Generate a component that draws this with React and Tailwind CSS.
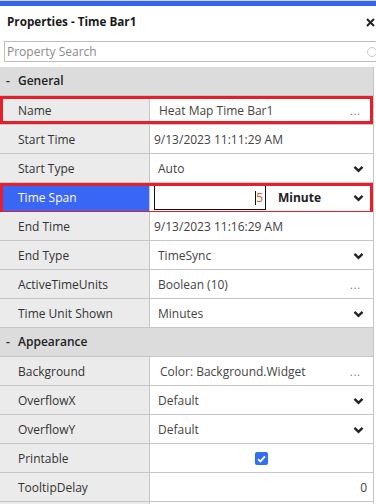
import React from "react";

const Chevron = () => (
  <svg width="11" height="8" viewBox="0 0 11 8" className="shrink-0">
    <path d="M1.5 1.8 L5.5 5.8 L9.5 1.8" fill="none" stroke="#222" strokeWidth="2.4" />
  </svg>
);

const Dots = () => <span className="text-[10px] tracking-[1px] text-[#666] leading-none">...</span>;

const Row = ({ label, children, highlight, active }) => (
  <div className="relative grid grid-cols-[150px_1fr] h-[29px] border-b border-[#c6c6c6]">
    <div
      className={
        active
          ? "flex items-center pl-[18px] pt-[1px] bg-[#3a66f6] text-white border-r border-[#c6c6c6]"
          : "flex items-center pl-[18px] pt-[1px] bg-[#ebebeb] text-[#333] border-r border-[#c6c6c6]"
      }
    >
      {label}
    </div>
    <div className="flex items-center pt-[1px] bg-white text-[#444] min-w-0">{children}</div>
    {highlight && (
      <div
        className={
          active
            ? "absolute left-0 right-0 top-0 -bottom-[3px] border-[3px] border-[#e6202b]"
            : "absolute left-0 right-0 top-0 bottom-0 border-[3px] border-[#e6202b]"
        }
      />
    )}
  </div>
);

const Section = ({ title }) => (
  <div className="flex items-center h-[29px] bg-[#dcdcdc] border-b border-[#c6c6c6] font-semibold text-[#222]">
    <span className="w-[18px] pl-[6px]">-</span>
    <span>{title}</span>
  </div>
);

const Select = ({ value, pl = "pl-[8px]" }) => (
  <div className={`flex flex-1 items-center justify-between ${pl} pr-[9px]`}>
    <span>{value}</span>
    <Chevron />
  </div>
);

const Dotted = ({ value, pl = "pl-[9px]" }) => (
  <div className={`flex flex-1 items-center justify-between ${pl} pr-[12px]`}>
    <span>{value}</span>
    <Dots />
  </div>
);

export default function App() {
  return (
    <div
      className="w-[376px] h-[504px] overflow-hidden bg-white text-[12px]"
      style={{ fontFamily: '"Open Sans", sans-serif' }}
    >
      <div className="h-[1px] bg-[#d6d6d6]" />
      <div className="h-[5px] bg-[#3366ee]" />
      <div className="flex items-center justify-between h-[35px] pb-[3px] pl-[7px] pr-[1px]">
        <span className="font-bold text-[11.7px] text-[#1a1a1a]">Properties - Time Bar1</span>
        <svg width="9" height="9" viewBox="0 0 9 9">
          <path d="M1 1 L8 8 M8 1 L1 8" stroke="#222" strokeWidth="2" />
        </svg>
      </div>
      <div className="relative ml-[4px] w-[380px] h-[21px] border border-[#bdbdbd] flex items-center pl-[2px]">
        <span className="text-[#8a8a8a] text-[12px]">Property Search</span>
        <div className="absolute left-[362px] top-[5px] w-[10px] h-[10px] rounded-full border-[1.5px] border-[#c8c8c8]" />
      </div>
      <div className="h-[5px]" />
      <div className="w-[374px] border-r border-[#c6c6c6]">
        <Section title="General" />
        <Row label="Name" highlight>
          <Dotted value="Heat Map Time Bar1" />
        </Row>
        <Row label="Start Time">
          <span className="pl-[4px]">9/13/2023 11:11:29 AM</span>
        </Row>
        <Row label="Start Type">
          <Select value="Auto" />
        </Row>
        <Row label="Time Span" highlight active>
          <div className="flex flex-1 items-center pl-[4px] pr-[9px]">
            <div className="flex items-center justify-end w-[112px] h-[25px] border border-[#111] pr-[2px]">
              <span className="w-[1px] h-[14px] bg-[#111]" />
              <span className="text-[#e0552a] leading-none">5</span>
            </div>
            <span className="ml-[12px] font-bold text-[#222] flex-1">Minute</span>
            <Chevron />
          </div>
        </Row>
        <Row label="End Time">
          <span className="pl-[4px]">9/13/2023 11:16:29 AM</span>
        </Row>
        <Row label="End Type">
          <Select value="TimeSync" />
        </Row>
        <Row label="ActiveTimeUnits">
          <Dotted value="Boolean (10)" pl="pl-[8px]" />
        </Row>
        <Row label="Time Unit Shown">
          <Select value="Minutes" />
        </Row>
        <Section title="Appearance" />
        <Row label="Background">
          <Dotted value="Color: Background.Widget" pl="pl-[10px]" />
        </Row>
        <Row label="OverflowX">
          <Select value="Default" />
        </Row>
        <Row label="OverflowY">
          <Select value="Default" />
        </Row>
        <Row label="Printable">
          <div className="flex flex-1 justify-center">
            <div className="w-[13px] h-[13px] rounded-[2px] bg-[#2f6ff0] flex items-center justify-center">
              <svg width="9" height="8" viewBox="0 0 9 8">
                <path d="M1 4.2 L3.4 6.4 L8 1.3" fill="none" stroke="white" strokeWidth="1.8" />
              </svg>
            </div>
          </div>
        </Row>
        <Row label="TooltipDelay">
          <div className="flex flex-1 justify-end pr-[6px]">0</div>
        </Row>
        <Row label="" />
      </div>
    </div>
  );
}
